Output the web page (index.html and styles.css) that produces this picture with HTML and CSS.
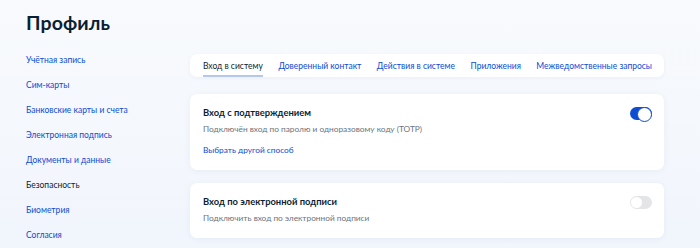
FILE: index.html
```html
<!DOCTYPE html>
<html lang="ru">
<head>
  <meta charset="utf-8" />
  <title>Профиль</title>
  <link rel="stylesheet" href="styles.css">
</head>
<body>
  <div class="page">
    <h1>Профиль</h1>
    <div class="layout">
      <!-- Side menu -->
      <nav class="side-menu">
        <a href="#">Учётная запись</a>
        <a href="#">Сим-карты</a>
        <a href="#">Банковские карты и счета</a>
        <a href="#">Электронная подпись</a>
        <a href="#">Документы и данные</a>
        <span class="current">Безопасность</span>
        <a href="#">Биометрия</a>
        <a href="#">Согласия</a>
      </nav>

      <main class="content">
        <div class="tabs">
          <span class="tab active">Вход в систему</span>
          <a class="tab" href="#">Доверенный контакт</a>
          <a class="tab" href="#">Действия в системе</a>
          <a class="tab" href="#">Приложения</a>
          <a class="tab" href="#">Межведомственные запросы</a>
        </div>

        <div class="card">
          <div class="card-head">
            <h3>Вход с подтверждением</h3>
            <span class="switch on"></span>
          </div>
          <p class="card-text">Подключён вход по паролю и одноразовому коду (TOTP)</p>
          <a class="card-link" href="#">Выбрать другой способ</a>
        </div>

        <div class="card">
          <div class="card-head">
            <h3>Вход по электронной подписи</h3>
            <span class="switch"></span>
          </div>
          <p class="card-text">Подключить вход по электронной подписи</p>
        </div>
      </main>
    </div>
  </div>
</body>
</html>
```

FILE: styles.css
```css
/* Reset */
* {
  margin: 0;
  padding: 0;
  box-sizing: border-box;
}

body {
  font-family: Lato, 'Noto Sans', sans-serif;
  background: linear-gradient(180deg, #f8fafd 0%, #f1f5fc 100%);
  color: #0b1f33;
  height: 248px;
  overflow: hidden;
}

a {
  color: #0d4cd3;
  text-decoration: none;
}

.page {
  padding: 12px 36px 0 26px;
}

h1 {
  font-size: 19.5px;
  font-weight: 700;
  line-height: 22px;
  letter-spacing: 0.1px;
}

.layout {
  display: flex;
  margin-top: 14px;
}

/* Side menu */
.side-menu {
  width: 164px;
  flex-shrink: 0;
  display: flex;
  flex-direction: column;
  font-size: 8.5px;
  line-height: 25px;
  white-space: nowrap;
}

.side-menu .current {
  color: #0b1f33;
}

/* Main column */
.content {
  flex: 1;
  min-width: 0;
  display: flex;
  flex-direction: column;
  padding-top: 6px;
}

.tabs {
  background: #fff;
  border-radius: 7px;
  height: 23px;
  display: flex;
  align-items: stretch;
  padding: 0 13px;
  gap: 15.5px;
  font-size: 8.5px;
  white-space: nowrap;
  box-shadow: 0 1px 4px rgba(12, 62, 160, 0.05);
  margin-bottom: 17px;
}

.tab {
  display: flex;
  align-items: center;
  border-bottom: 2px solid transparent;
  padding-top: 4px;
  padding-bottom: 1px;
}

.tab.active {
  color: #0b1f33;
  border-bottom-color: #b4c7ef;
}

.card {
  background: #fff;
  border-radius: 7px;
  padding: 11px 13px 13px;
  box-shadow: 0 1px 6px rgba(12, 62, 160, 0.06);
  margin-bottom: 13px;
}

.card-head {
  display: flex;
  justify-content: space-between;
  align-items: center;
}

.card-head h3 {
  font-size: 9.4px;
  font-weight: 700;
  line-height: 16px;
}

.card-text {
  font-size: 8.3px;
  color: #6b7480;
  line-height: 14px;
  margin-top: 1px;
}

.card-link {
  display: block;
  font-size: 8.3px;
  line-height: 14px;
  margin-top: 7px;
}

/* Toggle switch */
.switch {
  position: relative;
  width: 22px;
  height: 13px;
  border-radius: 7px;
  background: #e4e5e7;
  margin-right: -1px;
}

.switch::after {
  content: '';
  position: absolute;
  top: 1px;
  left: 1px;
  width: 11px;
  height: 11px;
  border-radius: 50%;
  background: #fff;
}

.switch.on {
  background: #0d4cd3;
}

.switch.on::after {
  left: auto;
  right: 0;
  top: 0;
  width: 13px;
  height: 13px;
  border: 1.5px solid #0d4cd3;
}
```
